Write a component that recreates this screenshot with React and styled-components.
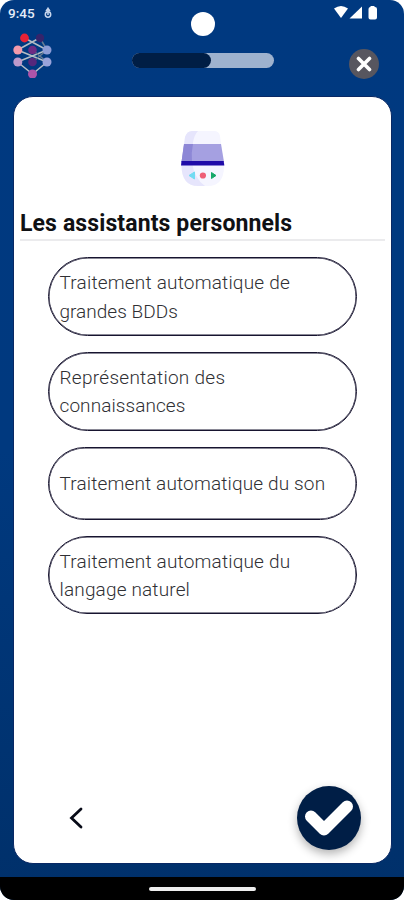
import styled, { createGlobalStyle } from "styled-components";

const GlobalStyle = createGlobalStyle`
    * {
        box-sizing: border-box;
    }
    body {
        margin: 0;
        background: #fff;
        font-family: Roboto, "Liberation Sans", sans-serif;
    }
    button {
        padding: 0;
        border: none;
        background: none;
        font: inherit;
    }
`;

const answers = [
    { id: 1, height: 79, gap: 15.5, lines: ["Traitement automatique de", "grandes BDDs"], spacing: [0.2, 0.02] },
    { id: 2, height: 79, gap: 16, lines: ["Représentation des", "connaissances"], spacing: [0.28, 0.08] },
    { id: 3, height: 73.5, gap: 16, lines: ["Traitement automatique du son"], spacing: [0.15] },
    { id: 4, height: 78, gap: 0, lines: ["Traitement automatique du", "langage naturel"], spacing: [0.19, 0.16] },
];

const Logo = () => (
    <svg width="42" height="48" viewBox="0 0 42 48">
        <g stroke="#b4bcc4" strokeWidth="1.5" fill="none">
            <path d="M14.5 8 37 20M7.5 20 29.5 8M7.5 20 37 32M37 20 7.5 32M7.5 32 22.5 44 37 32" />
            <path d="M30 8 37 20M22.5 20 37 32M22.5 32 37 20" stroke="#667b94" />
        </g>
        <circle cx="14.5" cy="8" r="4.4" fill="#e82235" />
        <circle cx="30" cy="8" r="4.2" fill="#35246b" />
        <circle cx="7.8" cy="20" r="4.5" fill="#f39aab" />
        <circle cx="22.5" cy="20" r="4.3" fill="#6d2b83" />
        <circle cx="37" cy="20" r="4.5" fill="#8c9cd6" />
        <circle cx="7.8" cy="32" r="4.5" fill="#bd9acb" />
        <circle cx="22.5" cy="32" r="4.3" fill="#56287c" />
        <circle cx="37" cy="32" r="4.5" fill="#98a3db" />
        <circle cx="22.5" cy="44" r="4.5" fill="#ae54a9" />
    </svg>
);

const Speaker = () => (
    <svg width="46" height="56" viewBox="0 0 46 56">
        <path d="M12 0H34Q39 0 40 5L44 35Q44 55 28 55H18Q2 55 1.5 35L5 6Q7 0 12 0Z" fill="#f5f5ff" />
        <path d="M12 0H18Q11 7 12 31Q14 47 25 55H18Q2 55 1.5 35L5 6Q7 0 12 0Z" fill="#e6e5fc" />
        <path d="M4 13H41L44 31H1.5Z" fill="#a5a0e1" />
        <path d="M4 13H13Q11 22 12 31H1.5Z" fill="#8d87d6" />
        <path d="M1.5 30H43.7L44.3 34.5H1Z" fill="#1f0ba8" />
        <path d="M9 44.5 14.5 41V48Z" fill="#72dbf2" stroke="#72dbf2" strokeLinejoin="round" />
        <circle cx="22.9" cy="44.5" r="3.1" fill="#ee5e76" />
        <path d="M31.5 41.5 36 44.5 31.5 47.5Z" fill="#16a86a" stroke="#16a86a" strokeLinejoin="round" />
    </svg>
);

const App = () => (
    <>
        <GlobalStyle />
        <Phone>
            <StatusBar>
                <Clock>9:45</Clock>
                <svg width="8" height="12" viewBox="0 0 8 12" fill="none" stroke="#c9d7ed" strokeWidth="1.5">
                    <path d="M4 0.5V8M2 4 4 1.5 6 4" />
                    <circle cx="4" cy="7.5" r="2.7" />
                </svg>
                <Signals width="46" height="14" viewBox="0 0 46 14" fill="#fff">
                    <path d="M1 2.5Q8 -2.5 15 2.5L8 12Z" />
                    <path d="M16.5 12.5 29 0.5V12.5Z" />
                    <path d="M37.5 1V0H41.5V1H42Q44 1 44 3V11.5Q44 13.5 42 13.5H37.5Q35.5 13.5 35.5 11.5V3Q35.5 1 37.5 1Z" />
                </Signals>
            </StatusBar>
            <Camera />
            <Header>
                <Logo />
                <Progress>
                    <ProgressValue />
                </Progress>
                <Close aria-label="Fermer">
                    <svg width="16" height="16" viewBox="0 0 16 16" stroke="#fff" strokeWidth="3.6" strokeLinecap="round">
                        <path d="M2.5 2.5 13.5 13.5M13.5 2.5 2.5 13.5" />
                    </svg>
                </Close>
            </Header>
            <Card>
                <Picture>
                    <Speaker />
                </Picture>
                <Title>Les assistants personnels</Title>
                <Answers>
                    {answers.map((answer) => (
                        <Answer key={answer.id} $height={answer.height} $gap={answer.gap}>
                            {answer.lines.map((line, i) => (
                                <Line key={line} $spacing={answer.spacing[i]}>
                                    {line}
                                </Line>
                            ))}
                        </Answer>
                    ))}
                </Answers>
                <Actions>
                    <Back aria-label="Retour">
                        <svg width="14" height="22" viewBox="0 0 14 22" fill="none" stroke="#080b18" strokeWidth="2.8" strokeLinecap="round">
                            <path d="M12 2 2.5 11 12 20" />
                        </svg>
                    </Back>
                    <Validate aria-label="Valider">
                        <svg width="50" height="38" viewBox="0 0 50 38" fill="none" stroke="#fff" strokeWidth="12" strokeLinecap="round" strokeLinejoin="round">
                            <path d="M7 17.5 20 30.5 43 7.5" />
                        </svg>
                    </Validate>
                </Actions>
            </Card>
            <NavBar>
                <Handle />
            </NavBar>
        </Phone>
    </>
);

const Phone = styled.div`
    position: relative;
    display: flex;
    flex-direction: column;
    width: 404px;
    height: 900px;
    overflow: hidden;
    border-radius: 14px;
    background: linear-gradient(#003980, #00397f 50%, #00306a);
`;
const StatusBar = styled.div`
    display: flex;
    align-items: center;
    height: 26px;
    padding: 0 25px 0 8px;
`;
const Clock = styled.span`
    width: 36px;
    color: #e4ecf8;
    font-size: 13.5px;
    font-weight: 500;
`;
const Signals = styled.svg`
    margin-left: auto;
`;
const Camera = styled.div`
    position: absolute;
    top: 12px;
    left: 191px;
    width: 24px;
    height: 24px;
    border-radius: 50%;
    background: #fff;
`;
const Header = styled.header`
    display: flex;
    justify-content: space-between;
    height: 70px;
    padding: 4px 25px 0 10px;
`;
const Progress = styled.div`
    width: 142px;
    height: 15px;
    margin: 23px 0 0 5px;
    border-radius: 8px;
    background: #9eb2ce;
`;
const ProgressValue = styled.div`
    width: 79px;
    height: 15px;
    border-radius: 8px;
    background: #001e45;
`;
const Close = styled.button`
    display: flex;
    align-items: center;
    justify-content: center;
    width: 30px;
    height: 30px;
    margin-top: 19px;
    border-radius: 50%;
    background: #57565f;
`;
const Card = styled.main`
    display: flex;
    flex-direction: column;
    width: 379px;
    height: 768px;
    margin-left: 13px;
    border: 1px solid #092864;
    border-radius: 20px;
    background: #fff;
`;
const Picture = styled.div`
    display: flex;
    justify-content: center;
    height: 109px;
    padding-top: 34px;
`;
const Title = styled.h1`
    height: 35px;
    margin: 0 6px;
    border-bottom: 2px solid #ebebed;
    color: #101114;
    font-size: 23px;
    font-weight: 700;
    line-height: 35px;
    letter-spacing: 0.12px;
    white-space: nowrap;
`;
const Answers = styled.div`
    display: flex;
    flex-direction: column;
    padding: 16px 34px 0;
`;
const Answer = styled.button`
    display: flex;
    flex-direction: column;
    justify-content: center;
    height: ${(props) => props.$height}px;
    margin-bottom: ${(props) => props.$gap}px;
    padding: 2px 0 0 10.5px;
    border: 1px solid #17142f;
    border-radius: 40px;
    box-shadow: inset 0 0 0 0.5px #17142f;
    text-align: left;
`;
const Line = styled.span`
    color: #303034;
    font-size: 19px;
    font-weight: 300;
    line-height: 28.5px;
    letter-spacing: ${(props) => props.$spacing}px;
    white-space: nowrap;
`;
const Actions = styled.div`
    display: flex;
    align-items: center;
    justify-content: space-between;
    margin-top: auto;
    padding: 0 30px 13px 55px;
`;
const Back = styled.button`
    display: flex;
`;
const Validate = styled.button`
    display: flex;
    align-items: center;
    justify-content: center;
    width: 64px;
    height: 64px;
    border-radius: 50%;
    background: #001e46;
    box-shadow: 0 4px 10px rgba(0, 0, 0, 0.3);
`;
const NavBar = styled.footer`
    display: flex;
    align-items: center;
    justify-content: center;
    height: 23px;
    margin-top: auto;
    background: #000;
`;
const Handle = styled.div`
    width: 107px;
    height: 4px;
    border-radius: 2px;
    background: #eee;
`;

export default App;
